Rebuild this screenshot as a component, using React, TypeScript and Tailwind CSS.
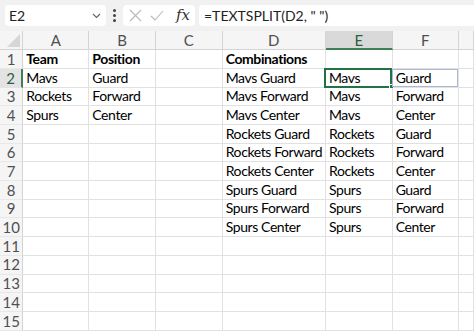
import type { FC } from "react";

const cols = ["A", "B", "C", "D", "E", "F", ""];

const rows: string[][] = [
	["Team", "Position", "", "Combinations", "", ""],
	["Mavs", "Guard", "", "Mavs Guard", "Mavs", "Guard"],
	["Rockets", "Forward", "", "Mavs Forward", "Mavs", "Forward"],
	["Spurs", "Center", "", "Mavs Center", "Mavs", "Center"],
	["", "", "", "Rockets Guard", "Rockets", "Guard"],
	["", "", "", "Rockets Forward", "Rockets", "Forward"],
	["", "", "", "Rockets Center", "Rockets", "Center"],
	["", "", "", "Spurs Guard", "Spurs", "Guard"],
	["", "", "", "Spurs Forward", "Spurs", "Forward"],
	["", "", "", "Spurs Center", "Spurs", "Center"],
	["", "", "", "", "", ""],
	["", "", "", "", "", ""],
	["", "", "", "", "", ""],
	["", "", "", "", "", ""],
	["", "", "", "", "", ""],
];

const FormulaBar: FC = () => (
	<div className="flex h-[31px] items-start bg-[#f1f1f1] pt-[5px] pl-[5px]">
		<div className="flex h-[21px] w-[101px] items-center justify-between rounded-[4px] bg-white pl-[4px] pr-[5px] text-[14px] text-[#222]">
			<span>E2</span>
			<svg width="9" height="6" viewBox="0 0 9 6" fill="none" stroke="#666" strokeWidth="1.2">
				<path d="M1 1l3.5 3.5L8 1" />
			</svg>
		</div>
		<div className="flex h-[21px] w-[17px] flex-col items-center justify-center gap-[2px]">
			<span className="size-[3px] rounded-full bg-[#444]" />
			<span className="size-[3px] rounded-full bg-[#444]" />
			<span className="size-[3px] rounded-full bg-[#444]" />
		</div>
		<div className="flex h-[21px] w-[72px] items-center rounded-[4px] bg-white pl-[6px]">
			<svg width="13" height="13" viewBox="0 0 13 13" fill="none" stroke="#b8b8b8" strokeWidth="1.1">
				<path d="M1 1l11 11M12 1L1 12" />
			</svg>
			<svg className="ml-[8px]" width="14" height="11" viewBox="0 0 14 11" fill="none" stroke="#b8b8b8" strokeWidth="1.1">
				<path d="M1 6l4 4L13 1" />
			</svg>
			<span className="ml-[12px] font-['DejaVu_Serif',serif] text-[15px] italic leading-none text-[#333]">
				fx
			</span>
		</div>
		<div className="ml-[4px] flex h-[21px] flex-1 items-center rounded-l-[4px] bg-white pl-[5px] text-[14px] text-[#222]">
			=TEXTSPLIT(D2, " ")
		</div>
	</div>
);

export default function App() {
	return (
		<div className="h-[334px] w-[474px] overflow-hidden bg-white font-['Lato','Noto_Sans',sans-serif]">
			<FormulaBar />
			<div className="grid grid-cols-[23.3px_66px_66.7px_66.7px_103.3px_66.7px_66.3px_1fr] grid-rows-[19.3px_repeat(15,18.7px)]">
				<div className="relative border-r border-b border-[#d4d4d4] bg-[#f5f5f5]">
					<svg className="absolute right-[2px] bottom-[2px]" width="13" height="13" viewBox="0 0 13 13">
						<path d="M13 0V13H0Z" fill="#d6d6d6" />
					</svg>
				</div>
				{cols.map((c) => (
					<div
						key={c || "g"}
						className={
							c === "E"
								? "flex items-center justify-center border-r border-b-2 border-r-[#d4d4d4] border-b-[#3f7f58] bg-[#d9d9d9] pt-[2px] text-[15px] text-[#2b5f3e]"
								: "flex items-center justify-center border-r border-b border-[#d4d4d4] bg-[#f5f5f5] text-[15px] text-[#505050]"
						}
					>
						{c}
					</div>
				))}
				{rows.map((r, i) => (
					<Row key={i} n={i + 1} cells={r} />
				))}
			</div>
		</div>
	);
}

const Row: FC<{ n: number; cells: string[] }> = ({ n, cells }) => (
	<>
		<div
			className={
				n === 2
					? "flex items-center justify-center border-r-2 border-b border-r-[#3f7f58] border-b-[#e3e3e3] bg-[#e3e3e3] text-[15px] text-[#2b5f3e]"
					: "flex items-center justify-center border-r border-b border-r-[#d4d4d4] border-b-[#e8e8e8] bg-[#f5f5f5] text-[15px] text-[#505050]"
			}
		>
			{n}
		</div>
		{[...cells, ""].map((v, j) => (
			<div
				key={j}
				className={
					"relative flex items-end overflow-visible whitespace-nowrap border-r border-b border-[#e1e1e1] pb-[1px] pl-[3px] text-[14px] leading-[16px] tracking-[-0.4px] text-black " +
					(n === 1 ? "font-bold" : "")
				}
			>
				{v}
				{n === 2 && j === 5 && (
					<div className="absolute inset-y-[0px] -left-[1px] -right-[0.5px] border border-[#a9b8d6]" />
				)}
				{n === 2 && j === 4 && (
					<div className="absolute -top-[1px] -left-[1.5px] -right-[0.5px] -bottom-[1px] border-2 border-[#217346]">
						<div className="absolute -right-[3.5px] -bottom-[3.5px] size-[5px] border border-white bg-[#217346]" />
					</div>
				)}
			</div>
		))}
	</>
);
